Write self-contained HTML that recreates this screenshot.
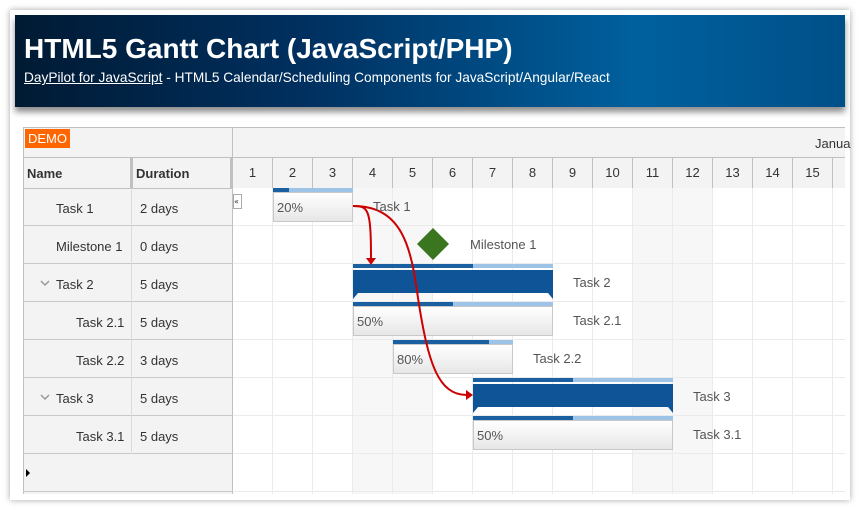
<!DOCTYPE html>
<html><head><style>
*{margin:0;padding:0;box-sizing:border-box}
body{width:860px;height:510px;background:#fff;font-family:"Liberation Sans",sans-serif;position:relative;overflow:hidden;color:#333}
.card{position:absolute;left:10px;top:10px;width:840px;height:490px;background:#fff;box-shadow:0 0 6px rgba(0,0,0,.35)}
.hdr{position:absolute;left:15px;top:15px;width:830px;height:92px;background:linear-gradient(90deg,#001a33 0%,#003060 35%,#00609e 75%,#005088 100%);box-shadow:0 5px 6px rgba(0,0,0,.45);color:#fff}
.hdr h1{position:absolute;left:9px;top:18px;font-size:28px;font-weight:bold;white-space:nowrap}
.hdr p{position:absolute;left:9px;top:55px;font-size:13.7px;white-space:nowrap}
.hdr u{text-decoration:underline}
.a{position:absolute}
.t{position:absolute;font-size:13px;white-space:nowrap}
.d{width:40px;border-right:1px solid #c0c0c0;font-size:13px;text-align:center;line-height:30px}
</style></head><body>
<div class="card"></div>
<div class="hdr"><h1>HTML5 Gantt Chart (JavaScript/PHP)</h1><p><u>DayPilot for JavaScript</u> - HTML5 Calendar/Scheduling Components for JavaScript/Angular/React</p></div>

<div class="a" style="left:23px;top:127px;width:822px;height:367px;background:#f3f3f3;border-top:1px solid #c0c0c0;border-left:1px solid #c0c0c0"></div>
<div class="a" style="left:25px;top:129px;height:19px;padding:1px 3px;background:#f60;color:#fff;font-size:13px;line-height:17px">DEMO</div>
<div class="a" style="left:232px;top:127px;width:1px;height:367px;background:#c0c0c0"></div>
<div class="t" style="left:815px;top:136px">Janua</div>
<div class="a" style="left:23px;top:157px;width:822px;height:1px;background:#c0c0c0"></div>
<div class="a" style="left:23px;top:188px;width:822px;height:1px;background:#c0c0c0"></div>
<div class="a" style="left:130px;top:158px;width:3px;height:30px;background:#c0c0c0"></div>
<div class="a" style="left:230px;top:158px;width:3px;height:30px;background:#c0c0c0"></div>
<div class="t" style="left:27px;top:166px;font-weight:bold">Name</div>
<div class="t" style="left:136px;top:166px;font-weight:bold">Duration</div>

<svg class="a" style="left:233px;top:188px" width="612" height="306">
<rect width="612" height="306" fill="#fff"/>
<rect x="120" width="80" height="306" fill="#f7f7f7"/>
<rect x="400" width="80" height="306" fill="#f7f7f7"/>
<g stroke="#ebebeb" stroke-width="1">
<line x1="39.5" y1="0" x2="39.5" y2="306"/><line x1="79.5" y1="0" x2="79.5" y2="306"/><line x1="119.5" y1="0" x2="119.5" y2="306"/><line x1="159.5" y1="0" x2="159.5" y2="306"/><line x1="199.5" y1="0" x2="199.5" y2="306"/><line x1="239.5" y1="0" x2="239.5" y2="306"/><line x1="279.5" y1="0" x2="279.5" y2="306"/><line x1="319.5" y1="0" x2="319.5" y2="306"/><line x1="359.5" y1="0" x2="359.5" y2="306"/><line x1="399.5" y1="0" x2="399.5" y2="306"/><line x1="439.5" y1="0" x2="439.5" y2="306"/><line x1="479.5" y1="0" x2="479.5" y2="306"/><line x1="519.5" y1="0" x2="519.5" y2="306"/><line x1="559.5" y1="0" x2="559.5" y2="306"/><line x1="599.5" y1="0" x2="599.5" y2="306"/>
<line x1="0" y1="37.5" x2="612" y2="37.5"/><line x1="0" y1="75.5" x2="612" y2="75.5"/><line x1="0" y1="113.5" x2="612" y2="113.5"/><line x1="0" y1="151.5" x2="612" y2="151.5"/><line x1="0" y1="189.5" x2="612" y2="189.5"/><line x1="0" y1="227.5" x2="612" y2="227.5"/><line x1="0" y1="265.5" x2="612" y2="265.5"/><line x1="0" y1="303.5" x2="612" y2="303.5"/>
</g>
<defs><linearGradient id="g" x1="0" y1="0" x2="0" y2="1"><stop offset="0" stop-color="#fff"/><stop offset="1" stop-color="#e6e6e6"/></linearGradient></defs>
<rect x="40" y="0" width="80" height="4" fill="#9dc3e6"/><rect x="40" y="0" width="16" height="4" fill="#1a5fa0"/>
<rect x="40.5" y="4.5" width="79" height="29" fill="url(#g)" stroke="#c8c8c8"/>
<polygon points="200,40 216,56 200,72 184,56" fill="#3a7520"/>
<rect x="120" y="76" width="200" height="4" fill="#9dc3e6"/><rect x="120" y="76" width="120" height="4" fill="#1a5fa0"/>
<polygon points="120,82 320,82 320,111 315,105 125,105 120,111" fill="#0e5496"/>
<rect x="120" y="114" width="200" height="4" fill="#9dc3e6"/><rect x="120" y="114" width="100" height="4" fill="#1a5fa0"/>
<rect x="120.5" y="118.5" width="199" height="29" fill="url(#g)" stroke="#c8c8c8"/>
<rect x="160" y="152" width="120" height="4" fill="#9dc3e6"/><rect x="160" y="152" width="96" height="4" fill="#1a5fa0"/>
<rect x="160.5" y="156.5" width="119" height="29" fill="url(#g)" stroke="#c8c8c8"/>
<rect x="240" y="190" width="200" height="4" fill="#9dc3e6"/><rect x="240" y="190" width="100" height="4" fill="#1a5fa0"/>
<polygon points="240,196 440,196 440,225 435,219 245,219 240,225" fill="#0e5496"/>
<rect x="240" y="228" width="200" height="4" fill="#9dc3e6"/><rect x="240" y="228" width="100" height="4" fill="#1a5fa0"/>
<rect x="240.5" y="232.5" width="199" height="29" fill="url(#g)" stroke="#c8c8c8"/>
<g fill="none" stroke="#c00" stroke-width="2">
<path d="M120,18 C135,18 138,20 138,70"/>
<path d="M120,18 C170,18 178,60 185,110 C195,175 205,207 234,207"/>
</g>
<polygon points="133,70 143,70 138,77" fill="#c00"/>
<polygon points="233,202 240,207 233,212" fill="#c00"/>
<rect x="0.5" y="6.5" width="8" height="14" fill="#fff" stroke="#aaa"/>
<text x="1" y="16" font-size="8" font-family="DejaVu Sans" fill="#333">«</text>
</svg>
<div class="t" style="left:277px;top:200px;color:#555">20%</div>
<div class="t" style="left:373px;top:199px;color:#555">Task 1</div>
<div class="t" style="left:470px;top:237px;color:#555">Milestone 1</div>
<div class="t" style="left:573px;top:275px;color:#555">Task 2</div>
<div class="t" style="left:357px;top:314px;color:#555">50%</div>
<div class="t" style="left:573px;top:313px;color:#555">Task 2.1</div>
<div class="t" style="left:397px;top:352px;color:#555">80%</div>
<div class="t" style="left:533px;top:351px;color:#555">Task 2.2</div>
<div class="t" style="left:693px;top:389px;color:#555">Task 3</div>
<div class="t" style="left:477px;top:428px;color:#555">50%</div>
<div class="t" style="left:693px;top:427px;color:#555">Task 3.1</div>

<div class="a" style="left:233px;top:158px;width:612px;height:30px;display:flex">
<div class="d">1</div><div class="d">2</div><div class="d">3</div><div class="d">4</div><div class="d">5</div><div class="d">6</div><div class="d">7</div><div class="d">8</div><div class="d">9</div><div class="d">10</div><div class="d">11</div><div class="d">12</div><div class="d">13</div><div class="d">14</div><div class="d">15</div>
</div>

<svg class="a" style="left:23px;top:188px" width="210" height="306">
<g stroke="#c8c8c8"><line x1="0" y1="37.5" x2="210" y2="37.5"/><line x1="0" y1="75.5" x2="210" y2="75.5"/><line x1="0" y1="113.5" x2="210" y2="113.5"/><line x1="0" y1="151.5" x2="210" y2="151.5"/><line x1="0" y1="189.5" x2="210" y2="189.5"/><line x1="0" y1="227.5" x2="210" y2="227.5"/><line x1="0" y1="265.5" x2="210" y2="265.5"/><line x1="0" y1="303.5" x2="210" y2="303.5"/></g>
<line x1="108.5" y1="0" x2="108.5" y2="266" stroke="#dcdcdc"/>
<polyline points="18,93 22,97 26,93" fill="none" stroke="#999" stroke-width="1.5"/>
<polyline points="18,207 22,211 26,207" fill="none" stroke="#999" stroke-width="1.5"/>
<polygon points="3,281 7,285 3,289" fill="#000"/>
</svg>
<div class="t" style="left:56px;top:201px">Task 1</div><div class="t" style="left:140px;top:201px">2 days</div>
<div class="t" style="left:56px;top:239px">Milestone 1</div><div class="t" style="left:140px;top:239px">0 days</div>
<div class="t" style="left:56px;top:277px">Task 2</div><div class="t" style="left:140px;top:277px">5 days</div>
<div class="t" style="left:76px;top:315px">Task 2.1</div><div class="t" style="left:140px;top:315px">5 days</div>
<div class="t" style="left:76px;top:353px">Task 2.2</div><div class="t" style="left:140px;top:353px">3 days</div>
<div class="t" style="left:56px;top:391px">Task 3</div><div class="t" style="left:140px;top:391px">5 days</div>
<div class="t" style="left:76px;top:429px">Task 3.1</div><div class="t" style="left:140px;top:429px">5 days</div>
</body></html>
